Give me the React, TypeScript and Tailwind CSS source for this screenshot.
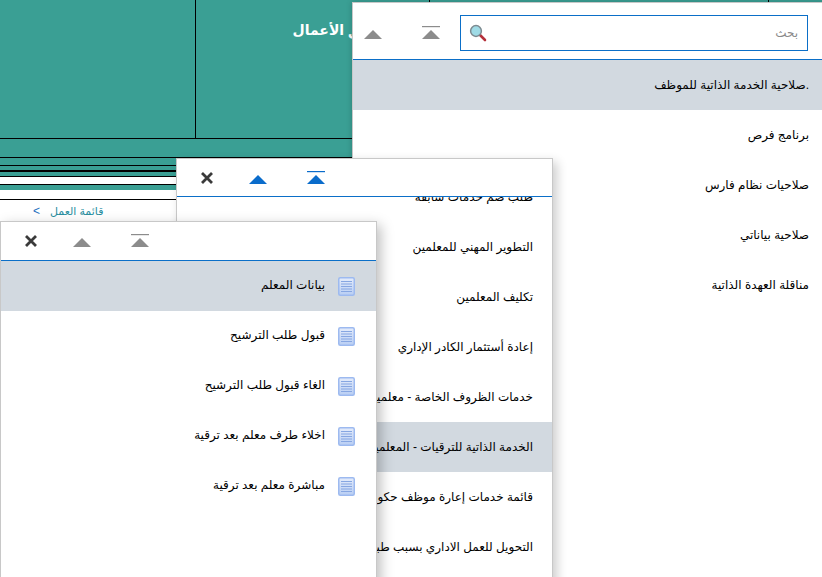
const font = "[font-family:'Liberation_Sans','DejaVu_Sans',sans-serif]";

const employeeItems = [
  ".صلاحية الخدمة الذاتية للموظف",
  "برنامج فرص",
  "صلاحيات نظام فارس",
  "صلاحية بياناتي",
  "مناقلة العهدة الذاتية",
];

const serviceItems = [
  "طلب ضم خدمات سابقة",
  "التطوير المهني للمعلمين",
  "تكليف المعلمين",
  "إعادة أستثمار الكادر الإداري",
  "خدمات الظروف الخاصة - معلمين",
  "الخدمة الذاتية للترقيات - المعلمين",
  "قائمة خدمات إعارة موظف حكومي",
  "التحويل للعمل الاداري بسبب طبي",
];

const teacherItems = [
  "بيانات المعلم",
  "قبول طلب الترشيح",
  "الغاء قبول طلب الترشيح",
  "اخلاء طرف معلم بعد ترقية",
  "مباشرة معلم بعد ترقية",
];

function TriangleIcon({ color }: { color: string }) {
  return (
    <svg width="18" height="14" viewBox="0 0 18 14" className="block">
      <path d="M9 4 L18 13 H0 Z" fill={color} />
    </svg>
  );
}

function TopIcon({ color }: { color: string }) {
  return (
    <svg width="18" height="14" viewBox="0 0 18 14" className="block">
      <rect x="0" y="0" width="18" height="1.2" fill={color} />
      <path d="M9 4 L18 13 H0 Z" fill={color} />
    </svg>
  );
}

function CloseIcon() {
  return (
    <svg width="14" height="14" viewBox="0 0 14 14" className="block">
      <path d="M2 2 L12 12 M12 2 L2 12" stroke="#3a3a3a" strokeWidth="2.8" />
    </svg>
  );
}

function SearchIcon() {
  return (
    <svg width="18" height="18" viewBox="0 0 18 18" className="block">
      <path d="M10.5 10.5 L16 16" stroke="#b5303a" strokeWidth="2.6" strokeLinecap="round" />
      <circle cx="7" cy="7" r="5.4" fill="#9fdbe6" stroke="#7d8a90" strokeWidth="1.5" />
    </svg>
  );
}

function PageIcon() {
  return (
    <svg width="17" height="19" viewBox="0 0 17 19" className="block shrink-0">
      <defs>
        <linearGradient id="pageFill" x1="0" y1="0" x2="0" y2="1">
          <stop offset="0" stopColor="#e4ecfb" />
          <stop offset="1" stopColor="#b9cef3" />
        </linearGradient>
      </defs>
      <rect x="0.75" y="0.75" width="15.5" height="17.5" rx="1.5" fill="url(#pageFill)" stroke="#9dbaf0" strokeWidth="1.5" />
      <path d="M3 4.5 H14 M3 7 H14 M3 9.5 H14 M3 12 H14 M3 14.5 H14" stroke="#86a6e2" strokeWidth="1" />
    </svg>
  );
}

function Row({ label, active, icon, pad }: { label: string; active?: boolean; icon?: boolean; pad: string }) {
  return (
    <div className={`flex h-[50px] items-center gap-[13px] whitespace-nowrap text-[12px] text-black ${pad} ${active ? "bg-[#d2d9e0]" : ""}`}>
      {icon && <PageIcon />}
      <span className={icon ? "pb-[3px]" : ""}>{label}</span>
    </div>
  );
}

export default function App() {
  return (
    <div className={`relative h-[577px] w-full overflow-hidden bg-white ${font}`}>
      <div className="grid h-[139px] grid-cols-[196px_234px_339px_1fr] border-b border-black bg-[#3a9f94]">
        <div className="border-r border-black" />
        <div className="border-r border-black pt-[20px] text-[14px] font-bold whitespace-nowrap text-white" dir="rtl">
          <span className="mr-[38px]">تطبيق الأعمال</span>
        </div>
        <div className="border-r border-black" />
        <div />
      </div>
      <div className="h-[19px] border-b border-black bg-[#3a9f94]" />
      <div className="h-[8px] border-b border-black bg-[#3a9f94]" />
      <div className="h-[6px] border-b-2 border-black bg-[#3a9f94]" />
      <div className="h-[5px] border-b border-black bg-[#3a9f94]" />
      <div className="h-[8px] border-b border-black bg-white" />
      <div className="h-[5px] bg-[#3a9f94]" />
      <div className="h-[10px] border-b border-black bg-white" />
      <div className="flex h-[24px] items-center gap-[10px] pb-[2px] pl-[33px] text-[11px] text-[#2a8f9f]">
        <span className="text-[12px] text-[#1f6fc0]">&lt;</span>
        <span dir="rtl">قائمة العمل</span>
      </div>

      <section dir="rtl" className="absolute top-[2px] left-[352px] h-[600px] w-[480px] border border-[#c8c8c8] bg-white shadow-[0_0_6px_rgba(0,0,0,0.2)]">
        <div className="flex h-[57px] items-center border-b border-[#0b6fc8] pt-[4px] pr-[23px]">
          <div className="flex h-[36px] w-[348px] items-center justify-between border-[1.5px] border-[#0b6fc8] pr-[9px] pl-[8px]">
            <span className="text-[12px] text-[#8a8a8a]">بحث</span>
            <SearchIcon />
          </div>
          <div className="mr-[20px]"><TopIcon color="#8c8c8c" /></div>
          <div className="mr-[40px]"><TriangleIcon color="#8c8c8c" /></div>
        </div>
        {employeeItems.map((item, i) => (
          <Row key={item} label={item} active={i === 0} pad="pr-[22px]" />
        ))}
      </section>

      <section dir="rtl" className="absolute top-[158px] left-[176px] h-[440px] w-[377px] border border-[#c8c8c8] bg-white shadow-[4px_4px_10px_rgba(0,0,0,0.2)]">
        <div className="relative z-10 flex h-[38px] items-center justify-end border-b border-[#0b6fc8] bg-white pl-[23px]">
          <TopIcon color="#0a6ccb" />
          <div className="mr-[40px]"><TriangleIcon color="#0a6ccb" /></div>
          <div className="mr-[35px]"><CloseIcon /></div>
        </div>
        <div className="-mt-[25px]">
          {serviceItems.map((item, i) => (
            <Row key={item} label={item} active={i === 5} pad="pr-[19px]" />
          ))}
        </div>
      </section>

      <section dir="rtl" className="absolute top-[221px] left-0 h-[380px] w-[377px] border border-[#c8c8c8] bg-white shadow-[4px_4px_12px_rgba(0,0,0,0.25)]">
        <div className="flex h-[39px] items-center justify-end border-b border-[#0b6fc8] pl-[23px]">
          <TopIcon color="#8c8c8c" />
          <div className="mr-[40px]"><TriangleIcon color="#8c8c8c" /></div>
          <div className="mr-[35px]"><CloseIcon /></div>
        </div>
        {teacherItems.map((item, i) => (
          <Row key={item} label={item} active={i === 0} icon pad="pr-[21px]" />
        ))}
      </section>
    </div>
  );
}
